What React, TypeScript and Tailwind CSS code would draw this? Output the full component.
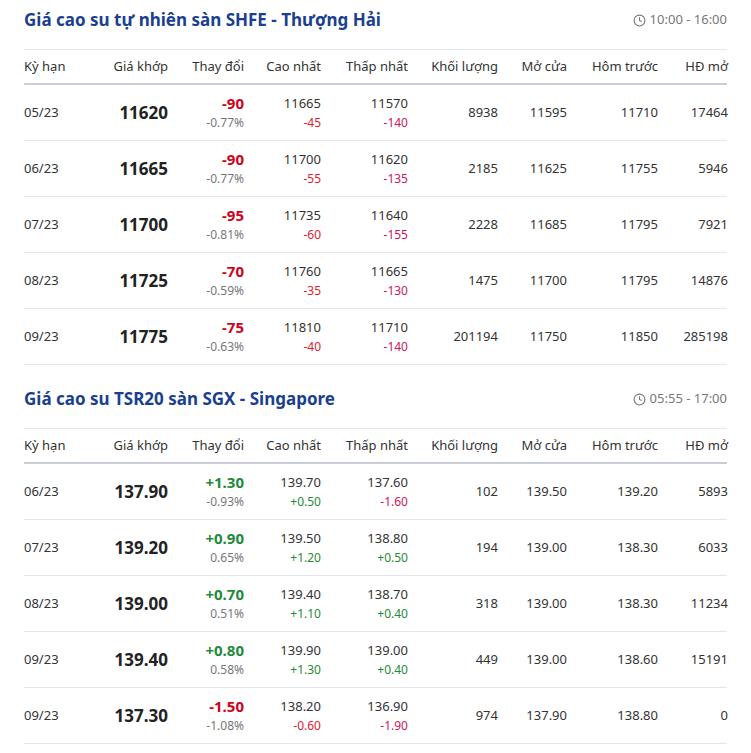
import React from "react";

type Row = { k: string; p: string; ch: string; pct: string; hi: string; hic: string; lo: string; loc: string; vol: string; open: string; prev: string; oi: string };

const shfe: Row[] = [
  { k: "05/23", p: "11620", ch: "-90", pct: "-0.77%", hi: "11665", hic: "-45", lo: "11570", loc: "-140", vol: "8938", open: "11595", prev: "11710", oi: "17464" },
  { k: "06/23", p: "11665", ch: "-90", pct: "-0.77%", hi: "11700", hic: "-55", lo: "11620", loc: "-135", vol: "2185", open: "11625", prev: "11755", oi: "5946" },
  { k: "07/23", p: "11700", ch: "-95", pct: "-0.81%", hi: "11735", hic: "-60", lo: "11640", loc: "-155", vol: "2228", open: "11685", prev: "11795", oi: "7921" },
  { k: "08/23", p: "11725", ch: "-70", pct: "-0.59%", hi: "11760", hic: "-35", lo: "11665", loc: "-130", vol: "1475", open: "11700", prev: "11795", oi: "14876" },
  { k: "09/23", p: "11775", ch: "-75", pct: "-0.63%", hi: "11810", hic: "-40", lo: "11710", loc: "-140", vol: "201194", open: "11750", prev: "11850", oi: "285198" },
];
const sgx: Row[] = [
  { k: "06/23", p: "137.90", ch: "+1.30", pct: "-0.93%", hi: "139.70", hic: "+0.50", lo: "137.60", loc: "-1.60", vol: "102", open: "139.50", prev: "139.20", oi: "5893" },
  { k: "07/23", p: "139.20", ch: "+0.90", pct: "0.65%", hi: "139.50", hic: "+1.20", lo: "138.80", loc: "+0.50", vol: "194", open: "139.00", prev: "138.30", oi: "6033" },
  { k: "08/23", p: "139.00", ch: "+0.70", pct: "0.51%", hi: "139.40", hic: "+1.10", lo: "138.70", loc: "+0.40", vol: "318", open: "139.00", prev: "138.30", oi: "11234" },
  { k: "09/23", p: "139.40", ch: "+0.80", pct: "0.58%", hi: "139.90", hic: "+1.30", lo: "139.00", loc: "+0.40", vol: "449", open: "139.00", prev: "138.60", oi: "15191" },
  { k: "09/23", p: "137.30", ch: "-1.50", pct: "-1.08%", hi: "138.20", hic: "-0.60", lo: "136.90", loc: "-1.90", vol: "974", open: "137.90", prev: "138.80", oi: "0" },
];

const cols = "grid grid-cols-[66px_78px_76px_77px_87px_90px_69px_91px_70px]";
const heads = ["Kỳ hạn", "Giá khớp", "Thay đổi", "Cao nhất", "Thấp nhất", "Khối lượng", "Mở cửa", "Hôm trước", "HĐ mở"];

const c = (v: string, red: string) => (v.startsWith("-") ? red : "text-[#1e8a3a]");

function Section({ title, time, rows }: { title: string; time: string; rows: Row[] }) {
  return (
    <div>
      <div className="flex items-center justify-between h-[40px]">
        <h2 className="text-[17px] font-bold text-[#1b3f8f]">{title}</h2>
        <div className="flex items-center gap-1 text-[13px] text-[#777]">
          <svg width="13" height="13" viewBox="0 0 24 24" fill="none" stroke="#777" strokeWidth="2"><circle cx="12" cy="12" r="10" /><path d="M12 6v6l4 2" /></svg>
          {time}
        </div>
      </div>
      <div className={`${cols} h-[36px] items-center border-t border-[#e3e6ea] border-b-2 border-b-[#c9ced6] text-[13px] text-[#333] mt-[9px]`}>
        {heads.map((h, i) => (
          <div key={i} className={i === 0 ? "text-left" : "text-right"}>{h}</div>
        ))}
      </div>
      {rows.map((r, i) => (
        <div key={i} className={`${cols} h-[56px] items-center border-b border-[#e3e6ea] text-[13px] text-[#333]`}>
          <div>{r.k}</div>
          <div className="text-right text-[17px] font-bold text-[#222]">{r.p}</div>
          <div className="text-right leading-[20px]">
            <div className={`font-bold text-[15px] ${c(r.ch, "text-[#d0021b]")}`}>{r.ch}</div>
            <div className="text-[12px] text-[#777]">{r.pct}</div>
          </div>
          <div className="text-right leading-[20px]">
            <div>{r.hi}</div>
            <div className={`text-[12px] ${c(r.hic, "text-[#e0202e]")}`}>{r.hic}</div>
          </div>
          <div className="text-right leading-[20px]">
            <div>{r.lo}</div>
            <div className={`text-[12px] ${c(r.loc, "text-[#c8175d]")}`}>{r.loc}</div>
          </div>
          <div className="text-right">{r.vol}</div>
          <div className="text-right">{r.open}</div>
          <div className="text-right">{r.prev}</div>
          <div className="text-right">{r.oi}</div>
        </div>
      ))}
    </div>
  );
}

export default function App() {
  return (
    <div className="w-[751px] h-[753px] bg-white px-[24px] overflow-hidden" style={{ fontFamily: '"Noto Sans", "Open Sans", sans-serif' }}>
      <Section title="Giá cao su tự nhiên sàn SHFE - Thượng Hải" time="10:00 - 16:00" rows={shfe} />
      <div className="h-[14px]" />
      <Section title="Giá cao su TSR20 sàn SGX - Singapore" time="05:55 - 17:00" rows={sgx} />
    </div>
  );
}
